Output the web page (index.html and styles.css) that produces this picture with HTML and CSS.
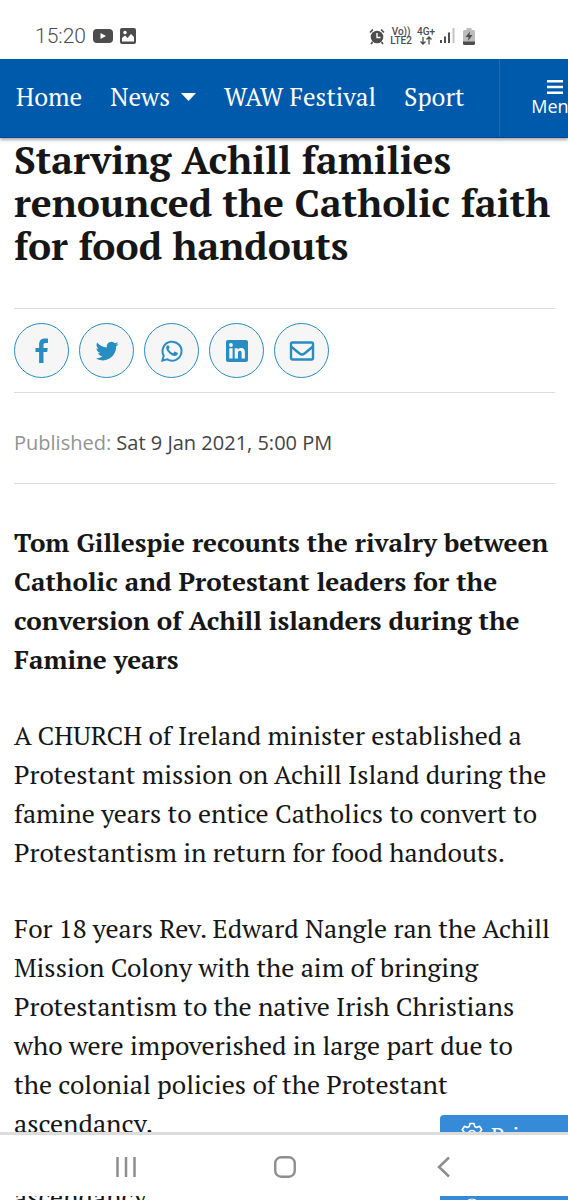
FILE: index.html
```html
<!DOCTYPE html>
<html lang="en">
<head>
<meta charset="utf-8">
<meta name="viewport" content="width=device-width, initial-scale=1">
<title>Starving Achill families renounced the Catholic faith for food handouts</title>
<link rel="stylesheet" href="styles.css">
</head>
<body>
<div class="screen">
  <header class="status">
    <div class="status-left">
      <time class="clock">15:20</time>
      <svg width="20" height="16" viewBox="0 0 20 16"><rect x="0" y="1" width="20" height="14" rx="4" fill="#4d4d4d"/><path d="M7.500 5v6l5.500-3z" fill="#fff"/></svg>
      <svg width="16" height="16" viewBox="0 0 16 16"><rect width="16" height="16" rx="2" fill="#4d4d4d"/><path d="M2 13.500V10l3-2.500 2.500 2.500L11 6l3 3v4.500z" fill="#fff"/><circle cx="5" cy="4.500" r="1.700" fill="#fff"/></svg>
    </div>
    <div class="status-right">
      <svg width="16" height="17" viewBox="0 0 16 17"><circle cx="8" cy="9" r="6.300" fill="#4d4d4d"/><path d="M1 4.500L4 1.500M15 4.500l-3-3M3.500 14L2 16M12.500 14l1.500 2" stroke="#4d4d4d" stroke-width="1.700" fill="none"/><path d="M8 5v4.500h3.500" stroke="#fff" stroke-width="1.400" fill="none"/></svg>
      <span class="tiny"><span>Vo))</span><span>LTE2</span></span>
      <span class="tiny"><span>4G+</span><svg width="12" height="9" viewBox="0 0 12 9" fill="none" stroke="#4d4d4d" stroke-width="1.300"><path d="M3 1v7M.500 5.500L3 8l2.500-2.500M9 8.500V1M6.500 3.500L9 1l2.500 2.500"/></svg></span>
      <svg width="15" height="16" viewBox="0 0 15 16"><path d="M0 12h2v3H0zM4 8.500h2V15H4zM8 4.500h2V15H8z" fill="#4d4d4d"/><path d="M12.500 0h2v15h-2z" fill="#c2c2c2"/></svg>
      <svg class="battery" width="12" height="17" viewBox="0 0 12 17"><path d="M3.500 0h5v2h2a1.500 1.500 0 0 1 1.500 1.500V14H0V3.500A1.500 1.500 0 0 1 1.500 2h2z" fill="#bcbcbc"/><path d="M0 13.500h12v2a1.500 1.500 0 0 1-1.500 1.500h-9A1.500 1.500 0 0 1 0 15.500z" fill="#4d4d4d"/><path d="M7 3.500L2.500 9H5.500L5 13l4.500-6H6.500z" fill="#4d4d4d"/></svg>
    </div>
  </header>
  <nav class="nav">
    <a class="link" href="#">Home</a>
    <a class="link" href="#">News<svg class="caret" width="15" height="8" viewBox="0 0 15 8"><path d="M0 0h15L7.500 8z" fill="#fff"/></svg></a>
    <a class="link" href="#">WAW Festival</a>
    <a class="link" href="#">Sport</a>
    <button class="menu" type="button">
      <svg width="16" height="14" viewBox="0 0 16 14"><path d="M0 0h16v2.500H0zM0 5.700h16v2.500H0zM0 11.400h16v2.500H0z" fill="#fff"/></svg>
      <span>Menu</span>
    </button>
  </nav>
  <main class="article">
    <h1 class="title">Starving Achill families renounced the Catholic faith for food handouts</h1>
    <div class="share">
      <a class="round" href="#" aria-label="Facebook"><svg width="14" height="26" viewBox="0 0 14 26"><path d="M13 .700v4.200h-2.400C9 4.900 8.500 5.600 8.500 7v2.900h4.300l-.600 4.100H8.500v11H4.100V14H.500V9.900h3.600V6.500C4.100 2.700 6.300.600 9.700.600c1.500 0 2.800.050 3.300.100z"/></svg></a>
      <a class="round" href="#" aria-label="Twitter"><svg width="24" height="24" viewBox="0 0 24 24"><path d="M23.600 4.900c-.850.400-1.750.650-2.700.750.950-.600 1.700-1.500 2.050-2.600-.900.550-1.900.900-3 1.150A4.750 4.750 0 0 0 11.900 8.500C8 8.300 4.500 6.400 2.150 3.550c-1.250 2.150-.600 5 1.450 6.350-.750 0-1.500-.250-2.150-.600 0 2.200 1.550 4.250 3.800 4.700-.700.200-1.400.200-2.150.100.600 1.850 2.350 3.200 4.400 3.250A9.500 9.500 0 0 1 .450 19.300a13.500 13.500 0 0 0 7.250 2.100c8.800 0 13.750-7.400 13.450-14.050.950-.650 1.800-1.500 2.450-2.450z"/></svg></a>
      <a class="round" href="#" aria-label="WhatsApp"><svg width="24" height="24" viewBox="0 0 24 24"><path fill="none" stroke="#288dc2" stroke-width="2" d="M2.300 21.700l1.400-5A9.500 9.500 0 1 1 7.300 20.400z"/><path d="M8.400 6.500c-.300-.500-.900-.400-1.300.050-1.400 1.500-1.100 3.500.200 5.400 1.800 2.700 4.200 4.600 7.200 5 1.600.100 3.300-1 3.400-2.600 0-.350-.100-.500-.500-.700l-2.100-1c-.400-.200-.650-.150-.900.150l-.900 1.150c-.250.250-.450.250-.800.100-1.700-.700-3.100-1.900-4-3.500-.200-.350-.100-.500.150-.750l.750-1c.150-.250.150-.450.050-.700z"/></svg></a>
      <a class="round" href="#" aria-label="LinkedIn"><svg width="24" height="24" viewBox="0 0 24 24"><rect x="1" y="1" width="22" height="22" rx="2"/><path fill="#f6f6f6" d="M4.300 9.300h3.300v10.300H4.300zM9.700 9.300h3.100v1.400c.6-1 1.700-1.700 3.200-1.700 3 0 3.900 2 3.900 4.800v5.800h-3.300v-5.200c0-1.400-.2-2.600-1.700-2.600-1.600 0-1.900 1.200-1.900 2.600v5.200H9.700z"/><circle cx="5.950" cy="6" r="1.900" fill="#f6f6f6"/></svg></a>
      <a class="round" href="#" aria-label="Email"><svg class="outline" width="26" height="20" viewBox="0 0 26 20"><rect x="2" y="1.500" width="22" height="17" rx="1.500"/><path d="M2 5.500l8.500 7q2.500 2 5 0l8.500-7"/></svg></a>
    </div>
    <p class="published">Published: <time class="date">Sat 9 Jan 2021, 5:00 PM</time></p>
    <p class="text lead">Tom Gillespie recounts the rivalry between Catholic and Protestant leaders for the conversion of Achill islanders during the Famine years</p>
    <p class="text">A CHURCH of Ireland minister established a Protestant mission on Achill Island during the famine years to entice Catholics to convert to Protestantism in return for food handouts.</p>
    <p class="text">For 18 years Rev. Edward Nangle ran the Achill Mission Colony with the aim of bringing Protestantism to the native Irish Christians who were impoverished in large part due to the colonial policies of the Protestant ascendancy.</p>
    <button class="privacy" type="button">
      <svg width="24" height="24" viewBox="0 0 24 24" fill="none" stroke="#fff" stroke-width="1.600" stroke-linejoin="round"><path d="M10 1.500h4l.7 3 2 1 2.800-1.200 2.300 3.400-1.900 2.400v3.800l1.900 2.400-2.300 3.400-2.800-1.200-2 1-.7 3h-4l-.7-3-2-1-2.800 1.200-2.300-3.400 1.900-2.400v-3.800L2.200 7.700l2.300-3.400 2.800 1.200 2-1z"/><circle cx="12" cy="12" r="3.500"/></svg>
      <span>Privacy</span>
    </button>
  </main>
  <footer class="system">
    <button class="key" type="button" aria-label="Recent apps"><svg width="22" height="22" viewBox="0 0 22 22"><path d="M2.500 1v20M11 1v20M19.500 1v20" stroke="#8e8e8e" stroke-width="2.500"/></svg></button>
    <button class="key" type="button" aria-label="Home screen"><svg width="22" height="22" viewBox="0 0 22 22"><rect x="1.250" y="1.250" width="19.500" height="19.500" rx="6" fill="none" stroke="#8e8e8e" stroke-width="2.400"/></svg></button>
    <button class="key" type="button" aria-label="Back"><svg width="22" height="22" viewBox="0 0 22 22"><path d="M16 1.500L6 11l10 9.500" fill="none" stroke="#8e8e8e" stroke-width="2.500"/></svg></button>
  </footer>
  <div class="peek" aria-hidden="true">
    <span class="peek-text">ascendancy</span>
    <span class="peek-tab"><svg width="8" height="4" viewBox="0 0 8 4"><path d="M0 4q4-2 8 0" fill="none" stroke="#fff"/></svg></span>
  </div>
</div>
</body>
</html>
```
FILE: styles.css
```css
* { box-sizing: border-box; }
body { margin: 0; background: #fff; color: #161616; font-family: "PT Serif", "Liberation Serif", serif; }
svg { display: block; flex: none; }
button { border: 0; font: inherit; cursor: pointer; }
a { color: inherit; text-decoration: none; }
.screen { display: flex; flex-direction: column; height: 100vh; overflow: hidden; }

.status { flex: none; display: flex; justify-content: space-between; height: 59px; padding: 13px 93px 0 35px; color: #4d4d4d; font-family: Roboto, sans-serif; }
.status-left, .status-right { display: flex; align-items: center; gap: 7px; }
.status-right { gap: 5px; }
.clock { font-size: 21px; font-weight: 300; }
.tiny { display: flex; flex-direction: column; align-items: center; font-size: 10px; line-height: 9px; font-weight: 500; }
.battery { margin-left: 3px; }

.nav { position: relative; z-index: 1; flex: none; display: flex; align-items: stretch; height: 79px; padding-left: 16px; background: #005aab; color: #fff; border-bottom: 1px solid #00488c; box-shadow: 0 2px 3px #aaa; }
.link { display: flex; align-items: center; flex: none; margin-right: 28px; padding-bottom: 3px; font-size: 25px; white-space: nowrap; }
.caret { margin-left: 11px; }
.menu { flex: none; display: flex; flex-direction: column; align-items: center; justify-content: center; gap: 2px; margin-left: 7px; padding: 0 31px; background: none; color: #fff; border-left: 1px solid #1a6cb8; font-family: "Open Sans", sans-serif; font-size: 18px; line-height: 20px; }

.article { position: relative; flex: 1; min-height: 0; overflow: hidden; padding: 0 13px 0 14px; }
.title { margin: 0 0 41px; font-size: 39px; line-height: 43px; font-weight: 700; }
.share { display: flex; gap: 10px; padding: 14px 0; border: solid #ddd; border-width: 1px 0; }
.round { display: grid; place-items: center; width: 55px; height: 55px; border: 1px solid #288dc2; border-radius: 50%; background: #f6f6f6; }
.round svg { fill: #288dc2; }
.round .outline { fill: none; stroke: #288dc2; stroke-width: 2.4; }
.published { margin: 0 0 39px; padding: 35px 0 25px; border-bottom: 1px solid #ddd; color: #939393; font-family: "Open Sans", sans-serif; font-size: 20px; line-height: 30px; }
.date { color: #444; }
.text { margin: 0 0 37px; font-size: 26px; line-height: 39px; }
.lead { font-weight: 700; }

.privacy { position: absolute; right: 0; bottom: -21px; display: flex; align-items: center; gap: 7px; width: 128px; height: 38px; padding: 0 0 0 20px; border-radius: 4px 0 0 0; background: #358bd8; color: #fff; font-size: 22px; }

.system { flex: none; display: flex; align-items: center; justify-content: space-around; height: 64px; padding: 2px 44px 0 46px; background: #fff; border-top: 3px solid #dcdcdc; }
.key { padding: 10px; background: none; }
.peek { flex: none; display: flex; justify-content: space-between; height: 4px; padding-left: 14px; overflow: hidden; }
.peek-text { font-size: 26px; line-height: 0; }
.peek-tab { width: 128px; padding-left: 28px; background: #358bd8; }
```
